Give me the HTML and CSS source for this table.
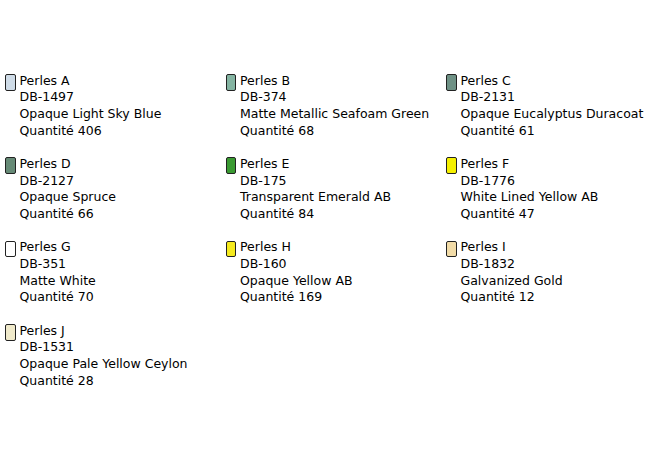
FILE: index.html
```html
<!DOCTYPE html>
<html>
<head>
<meta charset="utf-8">
<link rel="stylesheet" href="styles.css">
</head>
<body>
<div class="grid">
  <div class="item"><span class="sw c-a"></span><div class="txt"><div>Perles A</div><div>DB-1497</div><div>Opaque Light Sky Blue</div><div>Quantité 406</div></div></div>
  <div class="item"><span class="sw c-b"></span><div class="txt"><div>Perles B</div><div>DB-374</div><div>Matte Metallic Seafoam Green</div><div>Quantité 68</div></div></div>
  <div class="item"><span class="sw c-c"></span><div class="txt"><div>Perles C</div><div>DB-2131</div><div>Opaque Eucalyptus Duracoat</div><div>Quantité 61</div></div></div>
  <div class="item"><span class="sw c-d"></span><div class="txt"><div>Perles D</div><div>DB-2127</div><div>Opaque Spruce</div><div>Quantité 66</div></div></div>
  <div class="item"><span class="sw c-e"></span><div class="txt"><div>Perles E</div><div>DB-175</div><div>Transparent Emerald AB</div><div>Quantité 84</div></div></div>
  <div class="item"><span class="sw c-f"></span><div class="txt"><div>Perles F</div><div>DB-1776</div><div>White Lined Yellow AB</div><div>Quantité 47</div></div></div>
  <div class="item"><span class="sw c-g"></span><div class="txt"><div>Perles G</div><div>DB-351</div><div>Matte White</div><div>Quantité 70</div></div></div>
  <div class="item"><span class="sw c-h"></span><div class="txt"><div>Perles H</div><div>DB-160</div><div>Opaque Yellow AB</div><div>Quantité 169</div></div></div>
  <div class="item"><span class="sw c-i"></span><div class="txt"><div>Perles I</div><div>DB-1832</div><div>Galvanized Gold</div><div>Quantité 12</div></div></div>
  <div class="item"><span class="sw c-j"></span><div class="txt"><div>Perles J</div><div>DB-1531</div><div>Opaque Pale Yellow Ceylon</div><div>Quantité 28</div></div></div>
</div>
</body>
</html>
```
FILE: styles.css
```css
html, body { margin: 0; padding: 0; background: #fff; }
body {
  font-family: "DejaVu Sans", sans-serif;
  font-size: 12.5px;
  line-height: 16.67px;
  color: #000;
}
.grid {
  display: grid;
  grid-template-columns: 220.5px 220.5px 209px;
  row-gap: 16.67px;
  padding: 72.5px 0 0 5px;
}
.item { display: flex; align-items: flex-start; gap: 4px; }
.sw {
  flex: none;
  width: 8.5px;
  height: 14.5px;
  margin-top: 1.5px;
  border: 1.3px solid #222;
  border-radius: 2px;
}
.txt { white-space: nowrap; }
.c-a { background: #cfdce8; }
.c-b { background: #84b4a2; }
.c-c { background: #6e9185; }
.c-d { background: #668a76; }
.c-e { background: #3a9a32; }
.c-f { background: #f5f000; }
.c-g { background: #ffffff; }
.c-h { background: #f5ea1e; }
.c-i { background: #f2dca8; }
.c-j { background: #f0eacb; }
```
